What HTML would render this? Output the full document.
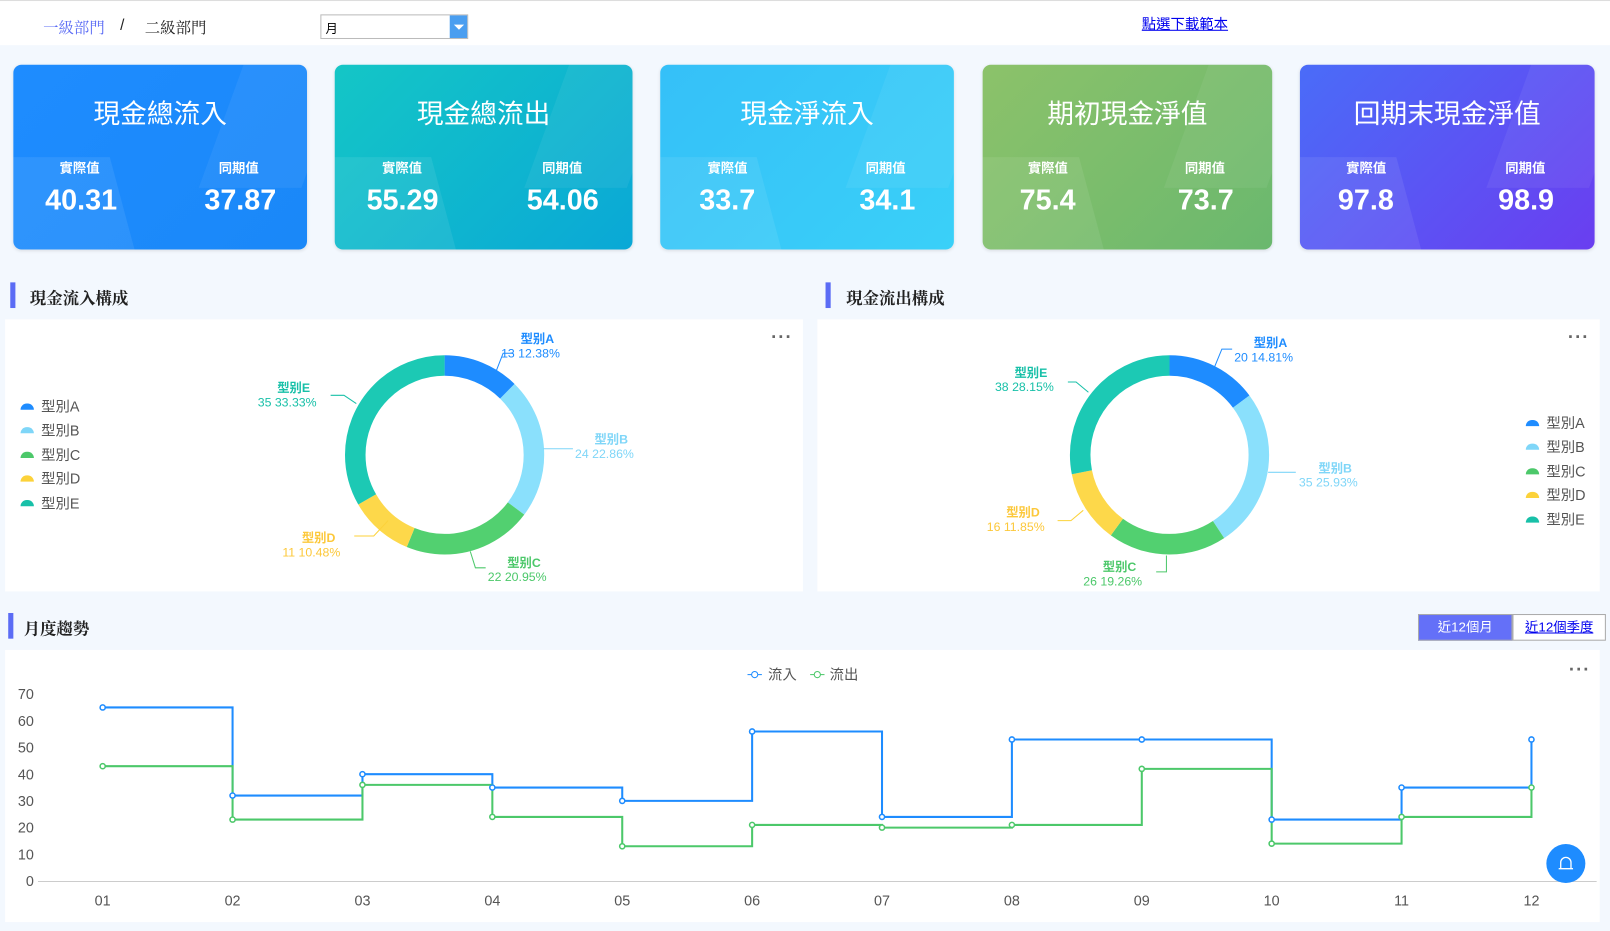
<!DOCTYPE html><html><head><meta charset="utf-8"><style>
*{margin:0;padding:0;box-sizing:border-box}
body{width:1610px;height:931px;background:#f3f8fe;font-family:"Liberation Sans","Noto Sans CJK TC",sans-serif;position:relative;overflow:hidden}
#w{position:absolute;left:0;top:0;width:1568px;height:907px;transform:scale(1.02679);transform-origin:0 0}
.a{position:absolute}
.top{left:0;top:0;width:1568px;height:44px;background:#fff;border-top:1px solid #ddd}
.card{position:absolute;top:63px;height:180px;border-radius:8px;color:#fff;overflow:hidden;box-shadow:0 1px 3px rgba(0,0,0,.1)}
.card h2{position:absolute;top:28px;width:100%;text-align:center;font-size:26px;font-weight:normal}
.card .l{position:absolute;top:90px;font-size:13px;font-weight:bold}
.card .v{position:absolute;top:116px;font-size:28px;font-weight:bold}
.card .sh{position:absolute;left:-30px;top:90px;width:140px;height:120px;background:rgba(255,255,255,.08);transform:skewX(15deg)}
.card .sh2{position:absolute;right:-20px;top:-20px;width:100px;height:140px;background:rgba(255,255,255,.06);transform:skewX(-20deg)}
.tt{position:absolute;font-size:16px;font-weight:bold;color:#222;font-family:"Liberation Serif","Noto Serif CJK SC",serif}
.bar{position:absolute;width:5px;height:25px;background:#5b6cf5}
.panel{position:absolute;background:#fff}
.leg{position:absolute;font-size:14px;color:#555;line-height:23.4px}
.leg i{display:inline-block;width:13px;height:6px;border-radius:6px 6px 0 0;margin-right:7px;vertical-align:2px}
.dots{position:absolute;font-size:18px;color:#666;letter-spacing:1px;font-weight:bold}
svg text{font-family:"Liberation Sans","Noto Sans CJK TC",sans-serif}
</style></head><body><div id="w">
<div class="a top"></div>
<div class="a" style="left:42px;top:16px;font-size:15px;color:#5b6cf5;font-family:'Liberation Serif','Noto Serif CJK SC',serif">一級部門</div>
<div class="a" style="left:117px;top:16px;font-size:15px;color:#222">/</div>
<div class="a" style="left:141px;top:16px;font-size:15px;color:#222;font-family:'Liberation Serif','Noto Serif CJK SC',serif">二級部門</div>
<div class="a" style="left:312px;top:14px;width:144px;height:24px;border:1px solid #bbb;background:#fff;font-size:12px;padding:4px 4px">月</div>
<div class="a" style="left:438px;top:15px;width:17px;height:22px;background:#4a9ef0"><div style="margin:9px 4px;width:0;height:0;border-left:5px solid transparent;border-right:5px solid transparent;border-top:5px solid #fff"></div></div>
<div class="a" style="left:1112px;top:13px;font-size:14px;color:#00e;text-decoration:underline">點選下載範本</div>

<div class="card" style="left:13px;width:286px;background:linear-gradient(135deg,#1e8cff,#1a88f8)"><div class="sh"></div><div class="sh2"></div><h2>現金總流入</h2><div class="l" style="left:45px">實際值</div><div class="l" style="left:200px">同期值</div><div class="v" style="left:31px">40.31</div><div class="v" style="left:186px">37.87</div></div>
<div class="card" style="left:326px;width:290px;background:linear-gradient(135deg,#14c6c6,#0aa8d6)"><div class="sh"></div><div class="sh2"></div><h2>現金總流出</h2><div class="l" style="left:46px">實際值</div><div class="l" style="left:202px">同期值</div><div class="v" style="left:31px">55.29</div><div class="v" style="left:187px">54.06</div></div>
<div class="card" style="left:643px;width:286px;background:linear-gradient(135deg,#35c0f8,#3ad0f8)"><div class="sh"></div><div class="sh2"></div><h2>現金淨流入</h2><div class="l" style="left:46px">實際值</div><div class="l" style="left:200px">同期值</div><div class="v" style="left:38px">33.7</div><div class="v" style="left:194px">34.1</div></div>
<div class="card" style="left:957px;width:282px;background:linear-gradient(135deg,#8cc26a,#6ab86e)"><div class="sh"></div><div class="sh2"></div><h2>期初現金淨值</h2><div class="l" style="left:44px">實際值</div><div class="l" style="left:197px">同期值</div><div class="v" style="left:36px">75.4</div><div class="v" style="left:190px">73.7</div></div>
<div class="card" style="left:1266px;width:287px;background:linear-gradient(135deg,#4a6cf8,#6a3ef0)"><div class="sh"></div><div class="sh2"></div><h2>回期末現金淨值</h2><div class="l" style="left:45px">實際值</div><div class="l" style="left:200px">同期值</div><div class="v" style="left:37px">97.8</div><div class="v" style="left:193px">98.9</div></div>

<div class="bar" style="left:10px;top:275px"></div><div class="tt" style="left:29px;top:278px">現金流入構成</div>
<div class="bar" style="left:804px;top:275px"></div><div class="tt" style="left:824px;top:278px">現金流出構成</div>
<div class="panel" style="left:5px;top:311px;width:777px;height:265px"></div>
<div class="panel" style="left:796px;top:311px;width:762px;height:265px"></div>
<div class="dots" style="left:751px;top:318px">···</div>
<div class="dots" style="left:1527px;top:318px">···</div>
<div class="leg" style="left:20px;top:385px"><div><i style="background:#1e8cff"></i>型別A</div><div><i style="background:#7fd6f8"></i>型別B</div><div><i style="background:#4cc86a"></i>型別C</div><div><i style="background:#fcd23a"></i>型別D</div><div><i style="background:#18c0a8"></i>型別E</div></div>
<div class="leg" style="left:1486px;top:401px"><div><i style="background:#1e8cff"></i>型別A</div><div><i style="background:#7fd6f8"></i>型別B</div><div><i style="background:#4cc86a"></i>型別C</div><div><i style="background:#fcd23a"></i>型別D</div><div><i style="background:#18c0a8"></i>型別E</div></div>

<svg class="a" style="left:0;top:0" width="1568" height="907">
<g transform="translate(433,443) rotate(-90)" fill="none" stroke-width="20">
<circle r="87" stroke="#1e8cff" stroke-dasharray="67.7 600" stroke-dashoffset="0"/>
<circle r="87" stroke="#8ae0fc" stroke-dasharray="124.9 600" stroke-dashoffset="-67.7"/>
<circle r="87" stroke="#52d070" stroke-dasharray="114.5 600" stroke-dashoffset="-192.6"/>
<circle r="87" stroke="#fdd84a" stroke-dasharray="57.3 600" stroke-dashoffset="-307.1"/>
<circle r="87" stroke="#1cc9b4" stroke-dasharray="182.2 600" stroke-dashoffset="-364.4"/>
</g>
<g transform="translate(1139,443) rotate(-90)" fill="none" stroke-width="20">
<circle r="87" stroke="#1e8cff" stroke-dasharray="81 600"/>
<circle r="87" stroke="#8ae0fc" stroke-dasharray="141.7 600" stroke-dashoffset="-81"/>
<circle r="87" stroke="#52d070" stroke-dasharray="105.3 600" stroke-dashoffset="-222.7"/>
<circle r="87" stroke="#fdd84a" stroke-dasharray="64.8 600" stroke-dashoffset="-328"/>
<circle r="87" stroke="#1cc9b4" stroke-dasharray="153.8 600" stroke-dashoffset="-392.8"/>
</g>
<g font-size="12" fill="none" stroke-width="1">
<path d="M483,362 L490,344 H500" stroke="#1e8cff"/><path d="M529,437 H558" stroke="#7fd6f8"/><path d="M458,537 L463,553 H473" stroke="#4cc86a"/><path d="M378,507 L364,522 H345" stroke="#fcd23a"/><path d="M347,393 L335,385 H322" stroke="#18c0a8"/>
<path d="M1183,357 L1190,340 H1200" stroke="#1e8cff"/><path d="M1235,460 H1262" stroke="#7fd6f8"/><path d="M1136,541 V557 H1126" stroke="#4cc86a"/><path d="M1055,497 L1043,507 H1030" stroke="#fcd23a"/><path d="M1060,382 L1048,372 H1040" stroke="#18c0a8"/>
</g>
<g font-size="12">
<text x="507" y="334" fill="#1e8cff" font-weight="bold">型别A</text><text x="488" y="348" fill="#1e8cff">13 12.38%</text>
<text x="579" y="432" fill="#7fd6f8" font-weight="bold">型别B</text><text x="560" y="446" fill="#7fd6f8">24 22.86%</text>
<text x="494" y="552" fill="#4cc86a" font-weight="bold">型别C</text><text x="475" y="566" fill="#4cc86a">22 20.95%</text>
<text x="294" y="528" fill="#fcc83a" font-weight="bold">型别D</text><text x="275" y="542" fill="#fcc83a">11 10.48%</text>
<text x="270" y="382" fill="#18c0a8" font-weight="bold">型别E</text><text x="251" y="396" fill="#18c0a8">35 33.33%</text>
<text x="1221" y="338" fill="#1e8cff" font-weight="bold">型别A</text><text x="1202" y="352" fill="#1e8cff">20 14.81%</text>
<text x="1284" y="460" fill="#7fd6f8" font-weight="bold">型别B</text><text x="1265" y="474" fill="#7fd6f8">35 25.93%</text>
<text x="1074" y="556" fill="#4cc86a" font-weight="bold">型别C</text><text x="1055" y="570" fill="#4cc86a">26 19.26%</text>
<text x="980" y="503" fill="#fcc83a" font-weight="bold">型别D</text><text x="961" y="517" fill="#fcc83a">16 11.85%</text>
<text x="988" y="367" fill="#18c0a8" font-weight="bold">型别E</text><text x="969" y="381" fill="#18c0a8">38 28.15%</text>
</g>
</svg>

<div class="bar" style="left:8px;top:597px"></div><div class="tt" style="left:23px;top:600px">月度趨勢</div>
<div class="a" style="left:1381px;top:598px;width:92px;height:26px;background:#6470f8;border:1px solid #aaa;color:#fff;font-size:13px;text-align:center;line-height:24px">近12個月</div>
<div class="a" style="left:1473px;top:598px;width:91px;height:26px;background:#fff;border:1px solid #aaa;color:#00e;font-size:13px;text-align:center;line-height:24px;text-decoration:underline">近12個季度</div>
<div class="panel" style="left:5px;top:633px;width:1553px;height:265px"></div>
<div class="dots" style="left:1528px;top:642px">···</div>
<svg class="a" style="left:0;top:0" width="1568" height="907">
<g font-size="14" fill="#555">
<path d="M728,657 H742" stroke="#1e8cff"/><circle cx="735" cy="657" r="3" fill="#fff" stroke="#1e8cff"/><text x="748" y="662">流入</text>
<path d="M789,657 H803" stroke="#4cc86a"/><circle cx="796" cy="657" r="3" fill="#fff" stroke="#4cc86a"/><text x="808" y="662">流出</text>
</g>
<path d="M37,858.5 H1555" stroke="#ccc"/>
<g font-size="14" fill="#555" text-anchor="end">
<text x="33" y="863">0</text><text x="33" y="837">10</text><text x="33" y="811">20</text><text x="33" y="785">30</text><text x="33" y="759">40</text><text x="33" y="733">50</text><text x="33" y="707">60</text><text x="33" y="681">70</text>
</g>
<g font-size="14" fill="#555" text-anchor="middle">
<text x="100" y="882">01</text><text x="226.5" y="882">02</text><text x="353" y="882">03</text><text x="479.5" y="882">04</text><text x="606" y="882">05</text><text x="732.5" y="882">06</text><text x="859" y="882">07</text><text x="985.5" y="882">08</text><text x="1112" y="882">09</text><text x="1238.5" y="882">10</text><text x="1365" y="882">11</text><text x="1491.5" y="882">12</text>
</g>
<path fill="none" stroke="#1e8cff" stroke-width="2" d="M100,689 H226.5 V774.8 H353 V754 H479.5 V767 H606 V780 H732.5 V712.4 H859 V795.6 H985.5 V720.2 H1112 V720.2 H1238.5 V798.2 H1365 V767 H1491.5 V720.2"/>
<path fill="none" stroke="#4cc86a" stroke-width="2" d="M100,746.2 H226.5 V798.2 H353 V764.4 H479.5 V795.6 H606 V824.2 H732.5 V803.4 H859 V806 H985.5 V803.4 H1112 V748.8 H1238.5 V821.6 H1365 V795.6 H1491.5 V767"/>
<g fill="#fff" stroke="#1e8cff" stroke-width="1.5">
<circle cx="100" cy="689" r="2.5"/><circle cx="226.5" cy="774.8" r="2.5"/><circle cx="353" cy="754" r="2.5"/><circle cx="479.5" cy="767" r="2.5"/><circle cx="606" cy="780" r="2.5"/><circle cx="732.5" cy="712.4" r="2.5"/><circle cx="859" cy="795.6" r="2.5"/><circle cx="985.5" cy="720.2" r="2.5"/><circle cx="1112" cy="720.2" r="2.5"/><circle cx="1238.5" cy="798.2" r="2.5"/><circle cx="1365" cy="767" r="2.5"/><circle cx="1491.5" cy="720.2" r="2.5"/>
</g>
<g fill="#fff" stroke="#4cc86a" stroke-width="1.5">
<circle cx="100" cy="746.2" r="2.5"/><circle cx="226.5" cy="798.2" r="2.5"/><circle cx="353" cy="764.4" r="2.5"/><circle cx="479.5" cy="795.6" r="2.5"/><circle cx="606" cy="824.2" r="2.5"/><circle cx="732.5" cy="803.4" r="2.5"/><circle cx="859" cy="806" r="2.5"/><circle cx="985.5" cy="803.4" r="2.5"/><circle cx="1112" cy="748.8" r="2.5"/><circle cx="1238.5" cy="821.6" r="2.5"/><circle cx="1365" cy="795.6" r="2.5"/><circle cx="1491.5" cy="767" r="2.5"/>
</g>
<circle cx="1525" cy="841" r="19" fill="#1e8cff"/>
<path d="M1520,846 V840 a5,5 0 0 1 10,0 V846 Z M1518,846 H1532" fill="none" stroke="#fff" stroke-width="1.3"/>
</svg>
</div></body></html>
